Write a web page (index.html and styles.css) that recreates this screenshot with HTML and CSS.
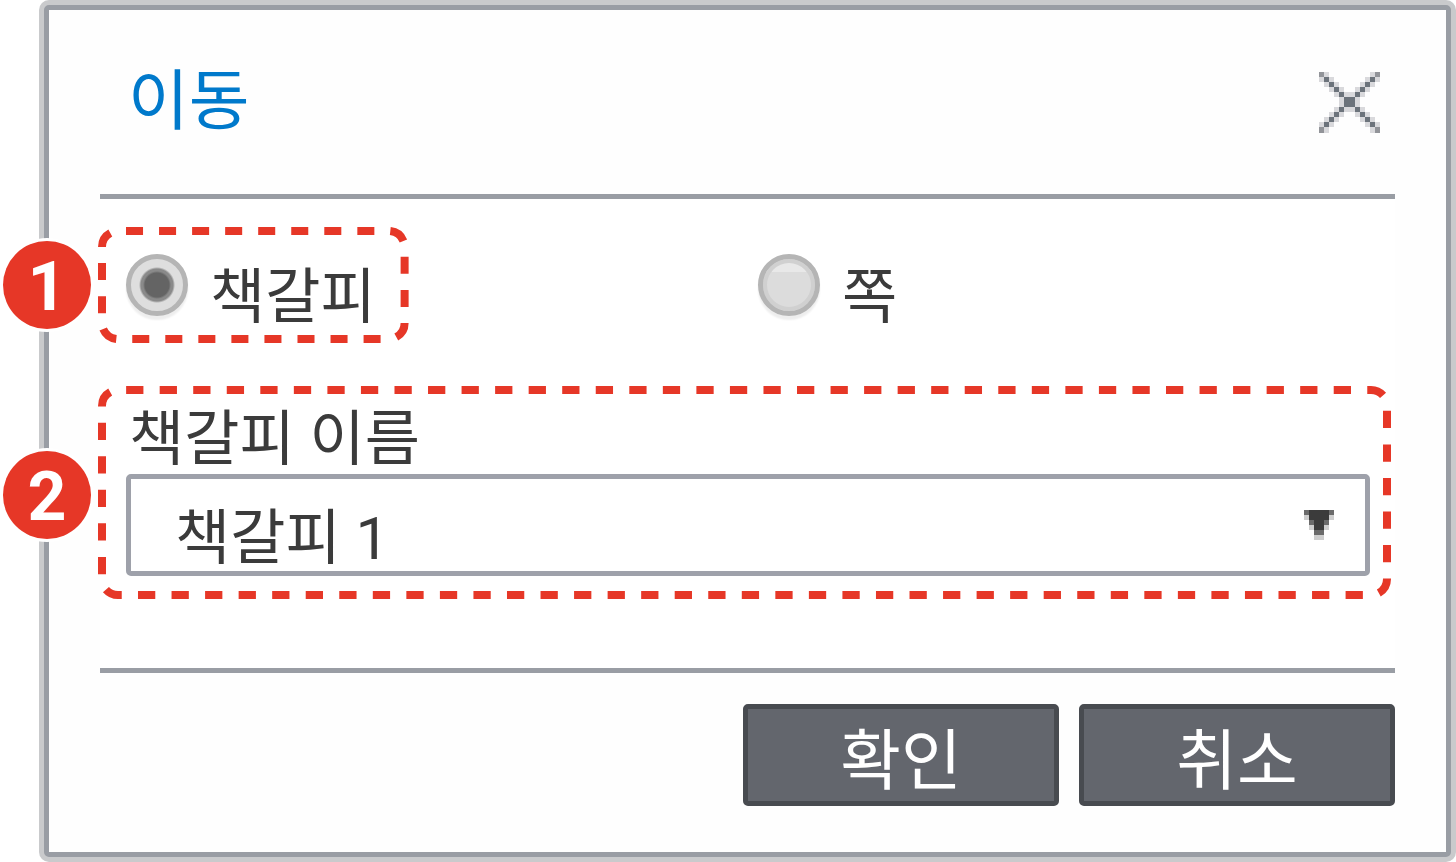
FILE: index.html
```html
<!DOCTYPE html>
<html lang="ko">
<head>
<meta charset="utf-8">
<title>이동</title>
<meta name="viewport" content="width=device-width, initial-scale=1">
<link rel="stylesheet" href="styles.css">
</head>
<body>
<form class="dialog" role="dialog" aria-labelledby="dialog-title">
  <header class="dialog-header">
    <h1 class="dialog-title" id="dialog-title">이동</h1>
    <button class="close" type="button" aria-label="닫기">
      <svg class="close-icon" viewBox="0 0 12 12" shape-rendering="crispEdges" aria-hidden="true">
        <path fill="#d9d9dc" d="M0 0h2v1h1v1h1v1h1v1h2v-1h1v-1h1v-1h1v-1h2v2h-1v1h-1v1h-1v1h-1v2h1v1h1v1h1v1h1v2h-2v-1h-1v-1h-1v-1h-1v-1h-2v1h-1v1h-1v1h-1v1h-2v-2h1v-1h1v-1h1v-1h1v-2h-1v-1h-1v-1h-1v-1h-1z"/>
        <path fill="#6c737b" d="M1 1h1v1h1v1h1v1h1v1h2v-1h1v-1h1v-1h1v-1h1v1h-1v1h-1v1h-1v1h-1v2h1v1h1v1h1v1h1v1h-1v-1h-1v-1h-1v-1h-1v-1h-2v1h-1v1h-1v1h-1v1h-1v-1h1v-1h1v-1h1v-1h1v-2h-1v-1h-1v-1h-1v-1h-1z"/>
        <path fill="#929499" d="M0 0h1v1h-1zM11 0h1v1h-1zM0 11h1v1h-1zM11 11h1v1h-1z"/>
      </svg>
    </button>
  </header>

  <div class="dialog-body">
    <div class="options" role="radiogroup" aria-labelledby="dialog-title">
      <div class="option marked">
        <input class="radio" type="radio" name="target" id="target-bookmark" checked>
        <label class="option-label" for="target-bookmark">책갈피</label>
        <svg class="outline" aria-hidden="true"><rect class="outline-rect" x="4" y="4" rx="16" pathLength="792"/></svg>
        <span class="badge">1</span>
      </div>
      <div class="option">
        <input class="radio" type="radio" name="target" id="target-page">
        <label class="option-label" for="target-page">쪽</label>
      </div>
    </div>

    <div class="field marked">
      <label class="field-label" for="bookmark-name">책갈피 이름</label>
      <div class="select-wrap">
        <select class="select" id="bookmark-name">
          <option>책갈피 1</option>
        </select>
        <svg class="arrow" viewBox="0 0 6 6" shape-rendering="crispEdges" aria-hidden="true">
          <path fill="#cecece" d="M0 1h1v1h-1zM5 1h1v1h-1zM1 3h1v1h-1zM4 3h1v1h-1zM2 5h2v1h-2z"/>
          <path fill="#6b6b6b" d="M0 0h1v1h-1zM5 0h1v1h-1zM1 2h1v1h-1zM4 2h1v1h-1zM2 4h2v1h-2z"/>
          <path fill="#3b3b3b" d="M1 0h4v2h-1v2h-2v-2h-1z"/>
        </svg>
      </div>
      <svg class="outline" aria-hidden="true"><rect class="outline-rect" x="4" y="4" rx="16" pathLength="2904"/></svg>
      <span class="badge">2</span>
    </div>
  </div>

  <footer class="dialog-footer">
    <button class="button" type="button">확인</button>
    <button class="button" type="button">취소</button>
  </footer>
</form>
</body>
</html>
```
FILE: styles.css
```css
* {
  box-sizing: border-box;
}

body {
  margin: 0;
  padding: 5px 5px 5px 44px;
  background: #fff;
  color: #3b3b3b;
  font-family: Roboto, "Noto Sans CJK KR", sans-serif;
  font-size: 60px;
  line-height: 72px;
}

.dialog {
  padding: 0 51px 46px;
  border: 5px solid #999da4;
  border-radius: 5px;
  background: #fefefe;
  box-shadow: 0 0 0 5px #c9cacc;
}

.dialog-header {
  display: flex;
  align-items: center;
  justify-content: space-between;
  min-height: 189px;
  padding: 0 10px 0 28px;
  border-bottom: 5px solid #999da4;
}

.dialog-title {
  margin: 0;
  color: #0079cb;
  font-size: 66px;
  font-weight: 400;
}

.close {
  display: flex;
  padding: 5px;
  border: 0;
  background: none;
}

.close-icon {
  width: 61px;
  height: 62px;
}

.dialog-body {
  padding: 28px 4px 69px 0;
  background: #fff;
}

.marked {
  position: relative;
}

.options {
  display: grid;
  grid-template-columns: 1fr 1fr;
  justify-items: start;
  margin: 0 29px 0 -2px;
}

.option {
  display: flex;
  align-items: center;
  gap: 22px;
  min-height: 116px;
  padding: 0 33px 0 28px;
}

.option-label {
  padding-top: 26px;
}

.radio {
  appearance: none;
  flex: none;
  width: 62px;
  height: 62px;
  margin: 0;
  border: 5px solid #b5b5b5;
  border-radius: 50%;
  background: linear-gradient(#e8e8e8 25%, #dcdcdc 25%);
  box-shadow: 0 4px 2px #eee, inset 0 0 0 4px #d0d0d0;
}

.radio:checked {
  background: radial-gradient(circle, #646464 12px, #8a8a8a 14px, #8a8a8a 16px, #dedede 18px);
  box-shadow: 0 4px 2px #eee;
}

.outline {
  position: absolute;
  inset: 0;
  width: 100%;
  height: 100%;
  pointer-events: none;
}

.outline-rect {
  width: calc(100% - 8px);
  height: calc(100% - 8px);
  fill: none;
  stroke: #e63727;
  stroke-width: 8px;
  stroke-dasharray: 17 16;
  stroke-dashoffset: -8px;
}

.badge {
  position: absolute;
  top: 50%;
  left: -95px;
  width: 88px;
  height: 88px;
  margin-top: -44px;
  border-radius: 50%;
  background: #e63727;
  box-shadow: 0 0 0 3px #fff;
  color: #fff;
  font-size: 68px;
  font-weight: 700;
  line-height: 92px;
  text-align: center;
}

.field .badge {
  margin-top: -42px;
}

.field {
  margin: 43px 0 0 -2px;
  padding: 16px 21px 23px 28px;
}

.field-label {
  display: block;
  padding: 3px 0 0 3px;
  line-height: 69px;
}

.select-wrap {
  position: relative;
}

.select {
  appearance: none;
  display: block;
  width: 100%;
  height: 102px;
  padding: 24px 80px 0 44px;
  border: 5px solid #9ea1aa;
  border-radius: 5px;
  background: #fff;
  color: inherit;
  font: inherit;
}

.arrow {
  position: absolute;
  top: 36px;
  right: 36px;
  width: 31px;
  height: 30px;
  pointer-events: none;
}

.dialog-footer {
  display: flex;
  justify-content: flex-end;
  gap: 20px;
  padding-top: 31px;
  border-top: 5px solid #999da4;
}

.button {
  width: 316px;
  height: 102px;
  padding: 14px 0 0;
  border: 5px solid #484b50;
  border-radius: 5px;
  background: #63666d;
  color: #fff;
  font: inherit;
  font-size: 66px;
}
```
